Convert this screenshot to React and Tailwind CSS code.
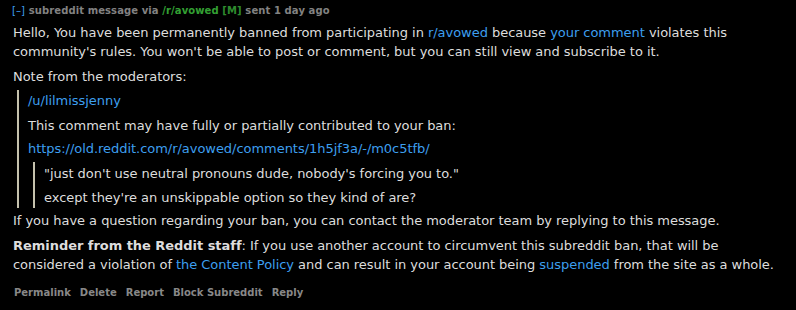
import React from "react";

const L = ({ children }) => <span className="text-[#3d9fef]">{children}</span>;

export default function App() {
  return (
    <div className="w-[796px] h-[310px] bg-black text-[#dddddd] overflow-hidden" style={{ fontFamily: '"DejaVu Sans", Verdana, sans-serif' }}>
      <div className="pl-[13px] pt-[4px]">
        <div className="text-[10px] font-bold leading-[14px] text-[#828282] -ml-[1px] tracking-[0.1px]">
          <span className="text-[#3d9fef] font-normal">[–]</span> subreddit message via <span className="text-[#33a033]">/r/avowed</span>{" "}
          <span className="text-[#2e8b2e]">[M]</span> sent 1 day ago
        </div>
        <div className="max-w-[770px] text-[13px] leading-[19px] tracking-[-0.04px]">
          <p className="mt-[5px]">
            Hello, You have been permanently banned from participating in <L>r/avowed</L> because <L>your comment</L> violates this community's rules. You won't be able to post or comment, but you can still view and subscribe to it.
          </p>
          <p className="mt-[6px]">Note from the moderators:</p>
          <div className="mt-[4px] border-l-2 border-[#c5c1ad] ml-[4px] pl-[9px]">
            <p className="pt-[1px]"><L>/u/lilmissjenny</L></p>
            <p className="mt-[6px]">This comment may have fully or partially contributed to your ban:</p>
            <p className="mt-[4px]"><L>https://old.reddit.com/r/avowed/comments/1h5jf3a/-/m0c5tfb/</L></p>
            <div className="mt-[4px] border-l-2 border-[#c5c1ad] ml-[5px] pl-[9px]">
              <p className="pt-[2px]">"just don't use neutral pronouns dude, nobody's forcing you to."</p>
              <p className="mt-[5px] pb-[1px]">except they're an unskippable option so they kind of are?</p>
            </div>
          </div>
          <p className="mt-[3px]">If you have a question regarding your ban, you can contact the moderator team by replying to this message.</p>
          <p className="mt-[6px]">
            <b>Reminder from the Reddit staff</b>: If you use another account to circumvent this subreddit ban, that will be considered a violation of <L>the Content Policy</L> and can result in your account being <L>suspended</L> from the site as a whole.
          </p>
        </div>
        <div className="mt-[11px] flex gap-[9px] text-[10px] font-bold text-[#888888] pl-[1px]">
          <span>Permalink</span>
          <span>Delete</span>
          <span>Report</span>
          <span>Block Subreddit</span>
          <span>Reply</span>
        </div>
      </div>
    </div>
  );
}
